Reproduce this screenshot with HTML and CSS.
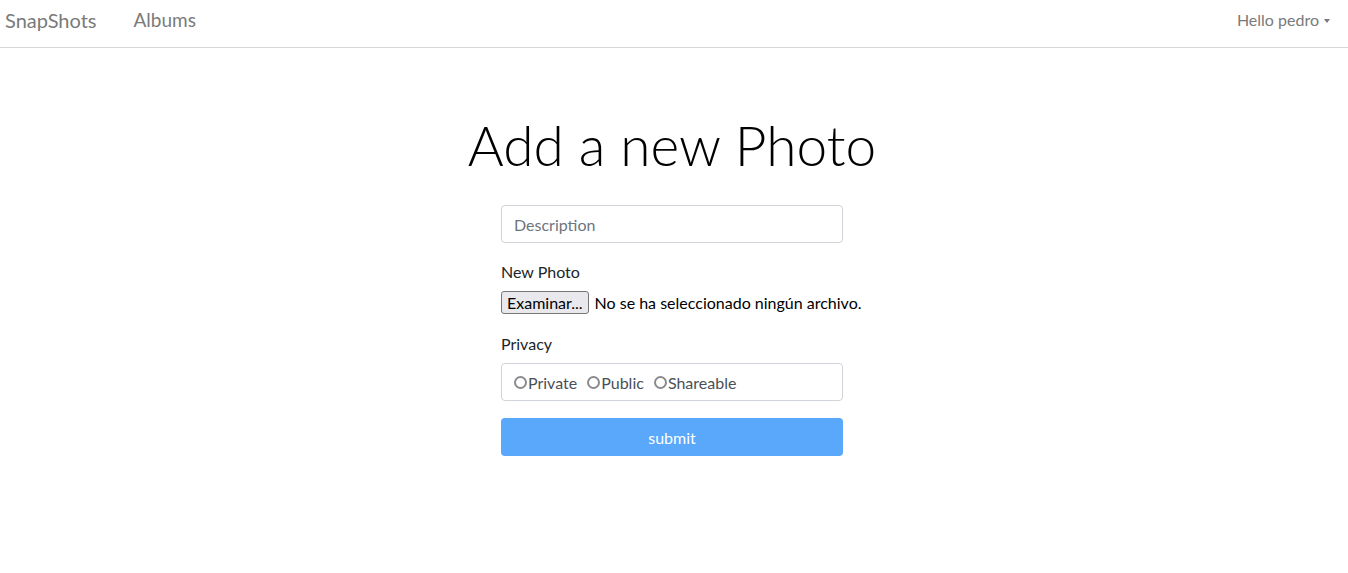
FILE: index.html
```html
<!DOCTYPE html>
<html lang="en">
<head>
    <meta charset="UTF-8">
    <meta name="viewport" content="width=device-width, initial-scale=1.0">
    <title>SnapShots - Add a new Photo</title>
    <link rel="stylesheet" href="styles.css">
</head>
<body>
    <nav class="navbar">
        <div class="nav-left">
            <a class="brand" href="#">SnapShots</a>
            <a class="nav-link" href="#">Albums</a>
        </div>
        <div class="nav-right">
            <a class="nav-link dropdown" href="#">Hello pedro</a>
        </div>
    </nav>

    <div class="main">
        <h1 class="title">Add a new Photo</h1>
        <form class="photo-form">
            <input class="form-control" type="text" placeholder="Description">

            <div class="group">
                <label class="label">New Photo</label>
                <div class="file-row">
                    <span class="file-btn">Examinar...</span>
                    <span class="file-name">No se ha seleccionado ningún archivo.</span>
                </div>
            </div>

            <div class="group">
                <label class="label">Privacy</label>
                <div class="form-control radios">
                    <label class="radio"><span class="dot"></span>Private</label>
                    <label class="radio"><span class="dot"></span>Public</label>
                    <label class="radio"><span class="dot"></span>Shareable</label>
                </div>
            </div>

            <button class="submit" type="button">submit</button>
        </form>
    </div>
</body>
</html>
```

FILE: styles.css
```css
* {
    margin: 0;
    padding: 0;
    box-sizing: border-box;
}
body {
    font-family: Lato, "Noto Sans", sans-serif;
    font-size: 16px;
    color: #212529;
    background: #fff;
}
a {
    text-decoration: none;
}
.navbar {
    display: flex;
    justify-content: space-between;
    align-items: center;
    height: 48px;
    padding: 0 18px 8px 5px;
    border-bottom: 1px solid #d6d6d6;
}
.nav-left {
    display: flex;
    align-items: center;
}
.brand {
    font-size: 20px;
    color: #7a7a7a;
    margin-right: 37px;
}
.nav-link {
    font-size: 19px;
    color: #7a7a7a;
}
.nav-right .nav-link {
    font-size: 16px;
}
.dropdown:after {
    content: "";
    display: inline-block;
    margin-left: 5px;
    vertical-align: 3px;
    border-top: 4px solid #7a7a7a;
    border-left: 3.5px solid transparent;
    border-right: 3.5px solid transparent;
}
.main {
    display: flex;
    flex-direction: column;
    align-items: center;
    padding-top: 64px;
    padding-right: 4px;
}
.title {
    font-size: 55px;
    font-weight: 300;
    line-height: 1.2;
    color: #000;
    margin-bottom: 27px;
}
.photo-form {
    width: 342px;
    display: flex;
    flex-direction: column;
}
.form-control {
    height: 38px;
    width: 100%;
    padding: 6px 12px;
    font-family: inherit;
    font-size: 16px;
    border: 1px solid #ced4da;
    border-radius: 4px;
    color: #495057;
}
.form-control::placeholder {
    color: #6c757d;
}
.group {
    margin-top: 19px;
}
.group + .group {
    margin-top: 20px;
}
.label {
    display: block;
    margin-bottom: 10px;
}
.file-row {
    display: flex;
    align-items: center;
    gap: 6px;
    white-space: nowrap;
}
.file-btn {
    font-size: 16px;
    padding: 1px 5px;
    border: 1px solid #767676;
    border-radius: 3px;
    background: #e9e9ed;
    color: #000;
}
.file-name {
    color: #000;
}
.radios {
    display: flex;
    align-items: center;
    gap: 10px;
}
.radio {
    display: flex;
    align-items: center;
}
.dot {
    width: 13px;
    height: 13px;
    border: 2px solid #8a8a8f;
    border-radius: 50%;
    margin-right: 1px;
}
.submit {
    margin-top: 17px;
    height: 38px;
    border: none;
    border-radius: 4px;
    background: #59a8fc;
    color: #fff;
    font-family: inherit;
    font-size: 16px;
}
```
